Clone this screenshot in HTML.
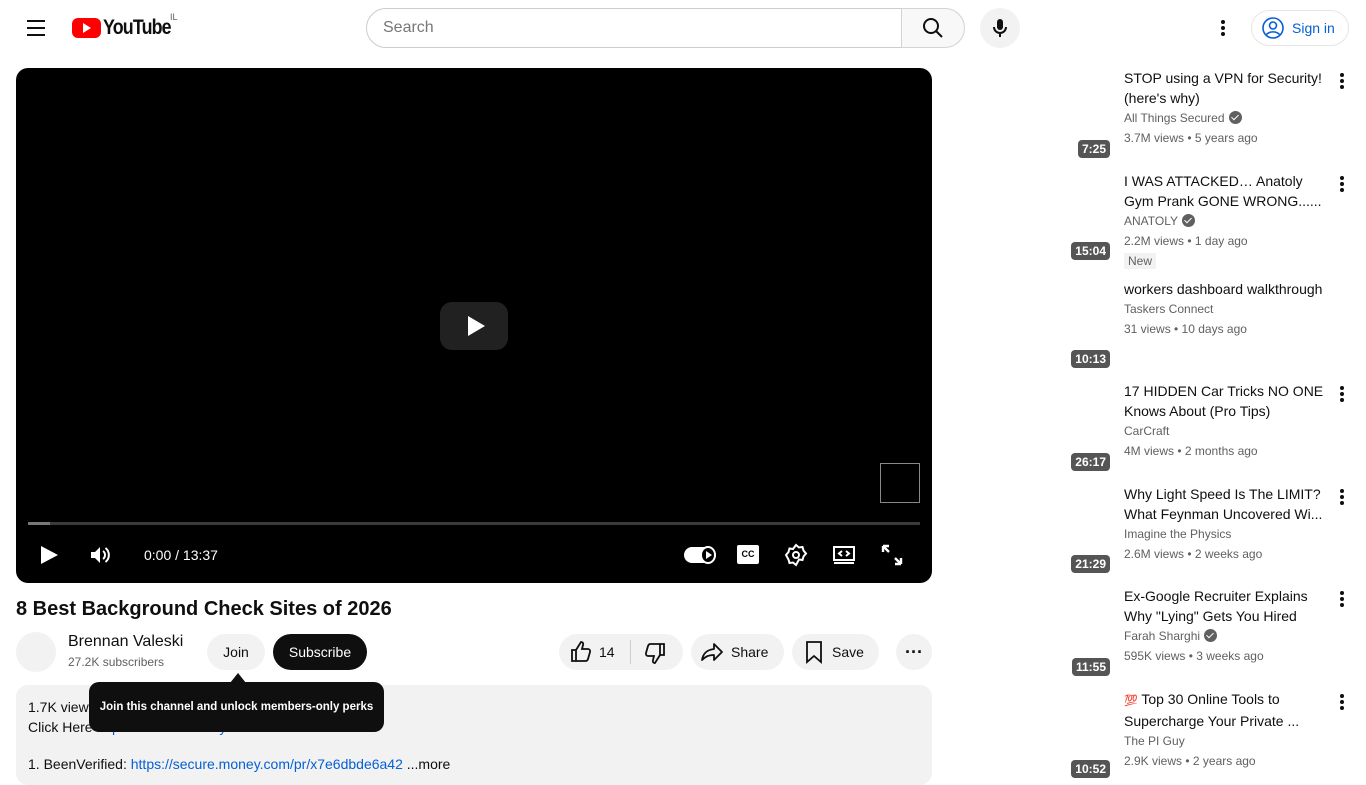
<!DOCTYPE html>
<html><head><meta charset="utf-8"><style>
*{box-sizing:border-box;margin:0;padding:0}
body{width:1366px;height:768px;overflow:hidden;background:#fff;font-family:"Liberation Sans",Arial,sans-serif;color:#0f0f0f;position:relative}
.abs{position:absolute}
.pill{position:absolute;background:#f2f2f2;border-radius:18px;height:36px;display:flex;align-items:center;font-size:14px}
.it{position:absolute;left:1124px;width:205px}
.it .t{font-size:14px;line-height:20px;color:#0f0f0f;white-space:nowrap;overflow:hidden;text-overflow:ellipsis}
.it .m{font-size:12px;line-height:20px;color:#606060}
.badge{position:absolute;right:256px;background:#555;color:#fff;font-size:12px;font-weight:bold;padding:1px 4px;border-radius:4px;line-height:16px}
.dots{position:absolute;left:1340px;width:4px}
.dots i{display:block;width:4px;height:4px;border-radius:2px;background:#0f0f0f;margin-bottom:2px}
.chk{display:inline-block;width:13px;height:13px;border-radius:50%;background:#606060;vertical-align:-2px;margin-left:4px;position:relative}
.chk:after{content:"";position:absolute;left:4px;top:2px;width:3px;height:6px;border:solid #fff;border-width:0 1.5px 1.5px 0;transform:rotate(45deg)}
</style></head><body>
<div class="abs" style="left:27px;top:20px;width:18px;height:2px;background:#0f0f0f;box-shadow:0 7px 0 #0f0f0f,0 14px 0 #0f0f0f"></div>
<div class="abs" style="left:72px;top:18px;width:29px;height:20px;background:#f00;border-radius:6px"></div>
<div class="abs" style="left:83px;top:23px;width:0;height:0;border-left:8px solid #fff;border-top:5px solid transparent;border-bottom:5px solid transparent"></div>
<div class="abs" style="left:103px;top:16px;font-size:21px;font-weight:bold;letter-spacing:-1px;transform:scaleX(.85);transform-origin:left">YouTube</div>
<div class="abs" style="left:170px;top:12px;font-size:9px;color:#606060">IL</div>
<div class="abs" style="left:366px;top:8px;width:536px;height:40px;border:1px solid #ccc;border-radius:20px 0 0 20px;padding-left:16px;line-height:38px;font-size:16px;color:#777">Search</div>
<div class="abs" style="left:901px;top:8px;width:64px;height:40px;border:1px solid #d3d3d3;border-radius:0 20px 20px 0;background:#f8f8f8"></div>
<svg class="abs" style="left:921px;top:16px" width="24" height="24" viewBox="0 0 24 24"><circle cx="10" cy="10" r="7" fill="none" stroke="#0f0f0f" stroke-width="2"/><path d="M15 15l6 6" stroke="#0f0f0f" stroke-width="2"/></svg>
<div class="abs" style="left:980px;top:8px;width:40px;height:40px;border-radius:50%;background:#f2f2f2"></div>
<svg class="abs" style="left:988px;top:16px" width="24" height="24" viewBox="0 0 24 24"><rect x="9" y="3" width="6" height="11" rx="3" fill="#0f0f0f"/><path d="M6 11a6 6 0 0012 0M12 17v4" fill="none" stroke="#0f0f0f" stroke-width="2"/></svg>
<div class="dots" style="left:1221px;top:20px"><i></i><i></i><i></i></div>
<div class="abs" style="left:1251px;top:10px;width:98px;height:36px;border:1px solid #e5e5e5;border-radius:18px;color:#065fd4;font-size:14px;line-height:34px;padding-left:40px">Sign in</div>
<svg class="abs" style="left:1261px;top:16px" width="24" height="24" viewBox="0 0 24 24"><circle cx="12" cy="12" r="10" fill="none" stroke="#065fd4" stroke-width="1.6"/><circle cx="12" cy="9.5" r="3.5" fill="none" stroke="#065fd4" stroke-width="1.6"/><path d="M5.5 18.5c3-3.5 10-3.5 13 0" fill="none" stroke="#065fd4" stroke-width="1.6"/></svg>
<div class="abs" style="left:16px;top:68px;width:916px;height:515px;background:#000;border-radius:12px"></div>
<div class="abs" style="left:440px;top:302px;width:68px;height:48px;background:#212121;border-radius:12px"></div>
<div class="abs" style="left:468px;top:316px;border-left:17px solid #fff;border-top:10px solid transparent;border-bottom:10px solid transparent"></div>
<div class="abs" style="left:880px;top:463px;width:40px;height:40px;border:1px solid #888"></div>
<div class="abs" style="left:28px;top:522px;width:892px;height:3px;background:#3a3a3a"></div>
<div class="abs" style="left:28px;top:522px;width:22px;height:3px;background:#777"></div>
<div class="abs" style="left:41px;top:546px;border-left:17px solid #fff;border-top:9px solid transparent;border-bottom:9px solid transparent"></div>
<svg class="abs" style="left:88px;top:543px" width="24" height="24" viewBox="0 0 24 24"><path d="M3 9h4l5-5v16l-5-5H3z" fill="#fff"/><path d="M15 8a5 5 0 010 8M17.5 5a9 9 0 010 14" fill="none" stroke="#fff" stroke-width="2"/></svg>
<div class="abs" style="left:144px;top:547px;color:#fff;font-size:14px">0:00 / 13:37</div>
<div class="abs" style="left:684px;top:547px;width:32px;height:16px;border-radius:8px;background:#fff"></div>
<div class="abs" style="left:700px;top:546px;width:16px;height:18px;border-radius:50%;background:#000;border:2px solid #fff"></div>
<div class="abs" style="left:706px;top:551px;border-left:6px solid #fff;border-top:4px solid transparent;border-bottom:4px solid transparent"></div>
<div class="abs" style="left:737px;top:545px;width:22px;height:19px;background:#fff;border-radius:2px;font-size:9px;font-weight:bold;color:#000;text-align:center;line-height:19px">CC</div>
<svg class="abs" style="left:784px;top:543px" width="24" height="24" viewBox="0 0 24 24"><path d="M12 2l3 2.5 3.5-.5 1 3.5 2.5 3-2.5 3-1 3.5-3.5-.5L12 22l-3-2.5-3.5.5-1-3.5L2 12l2.5-3 1-3.5 3.5.5z" fill="none" stroke="#fff" stroke-width="2"/><circle cx="12" cy="12" r="3" fill="none" stroke="#fff" stroke-width="2"/></svg>
<svg class="abs" style="left:832px;top:543px" width="24" height="24" viewBox="0 0 24 24"><rect x="2" y="4" width="20" height="13" fill="none" stroke="#fff" stroke-width="2"/><path d="M2 20h20M10 8l-3 2.5 3 2.5M14 8l3 2.5-3 2.5" fill="none" stroke="#fff" stroke-width="2"/></svg>
<svg class="abs" style="left:880px;top:543px" width="24" height="24" viewBox="0 0 24 24"><path d="M3 3h6M3 3v6M3 3l6 6M21 21h-6M21 21v-6M21 21l-6-6" fill="none" stroke="#fff" stroke-width="2.4"/></svg>
<div class="abs" style="left:16px;top:598px;font-size:20px;font-weight:bold">8 Best Background Check Sites of 2026</div>
<div class="abs" style="left:16px;top:632px;width:40px;height:40px;border-radius:50%;background:#f2f2f2"></div>
<div class="abs" style="left:68px;top:633px;font-size:16px">Brennan Valeski</div>
<div class="abs" style="left:68px;top:655px;font-size:12px;color:#606060">27.2K subscribers</div>
<div class="pill" style="left:207px;top:634px;width:58px;justify-content:center">Join</div>
<div class="pill" style="left:273px;top:634px;width:94px;justify-content:center;background:#0f0f0f;color:#fff">Subscribe</div>
<div class="pill" style="left:559px;top:634px;width:124px"></div>
<div class="abs" style="left:630px;top:640px;width:1px;height:24px;background:#ccc"></div>
<svg class="abs" style="left:569px;top:640px" width="24" height="24" viewBox="0 0 24 24"><path d="M3 10h4v11H3zM7 10l5-8c2 0 2.5 1.5 2 3l-1 4h6c1.5 0 2.5 1.5 2 3l-2 7c-.4 1.3-1.3 2-2.5 2H7" fill="none" stroke="#0f0f0f" stroke-width="1.8"/></svg>
<div class="abs" style="left:599px;top:644px;font-size:14px">14</div>
<svg class="abs" style="left:643px;top:641px;transform:rotate(180deg)" width="24" height="24" viewBox="0 0 24 24"><path d="M3 10h4v11H3zM7 10l5-8c2 0 2.5 1.5 2 3l-1 4h6c1.5 0 2.5 1.5 2 3l-2 7c-.4 1.3-1.3 2-2.5 2H7" fill="none" stroke="#0f0f0f" stroke-width="1.8"/></svg>
<div class="pill" style="left:691px;top:634px;width:93px;padding-left:40px">Share</div>
<svg class="abs" style="left:700px;top:640px" width="24" height="24" viewBox="0 0 24 24"><path d="M14 4l8 8-8 8v-5c-6 0-9 2-12 5 1-6 4-10 12-11z" fill="none" stroke="#0f0f0f" stroke-width="1.8" stroke-linejoin="round"/></svg>
<div class="pill" style="left:792px;top:634px;width:87px;padding-left:40px">Save</div>
<svg class="abs" style="left:802px;top:640px" width="24" height="24" viewBox="0 0 24 24"><path d="M5 2h14v20l-7-6-7 6z" fill="none" stroke="#0f0f0f" stroke-width="1.8"/></svg>
<div class="pill" style="left:896px;top:634px;width:36px;justify-content:center;font-weight:bold;font-size:18px;line-height:10px">&middot;&middot;&middot;</div>
<div class="abs" style="left:16px;top:685px;width:916px;height:100px;background:#f2f2f2;border-radius:12px"></div>
<div class="abs" style="left:28px;top:697px;font-size:14px;line-height:20px">1.7K views<br>Click Here <span style="color:#065fd4">https://secure.money.com/best-b...</span><br><br><span style="position:relative;top:-3px">1. BeenVerified: <span style="color:#065fd4">https://secure.money.com/pr/x7e6dbde6a42</span> ...more</span></div>
<div class="abs" style="left:230px;top:673px;border-bottom:10px solid #0f0f0f;border-left:8px solid transparent;border-right:8px solid transparent"></div>
<div class="abs" style="left:89px;top:682px;width:295px;height:50px;background:#0f0f0f;border-radius:10px;color:#fff;font-size:11.5px;font-weight:bold;line-height:50px;text-align:center">Join this channel and unlock members-only perks</div>
<div class="it" style="top:68px"><div class="t">STOP using a VPN for Security!</div><div class="t">(here's why)</div><div class="m">All Things Secured<span class="chk"></span></div><div class="m">3.7M views • 5 years ago</div></div>
<div class="badge" style="top:140px">7:25</div><div class="dots" style="top:73px"><i></i><i></i><i></i></div>
<div class="it" style="top:171px"><div class="t">I WAS ATTACKED… Anatoly</div><div class="t">Gym Prank GONE WRONG......</div><div class="m">ANATOLY<span class="chk"></span></div><div class="m">2.2M views • 1 day ago</div><div class="m"><span style="background:#f2f2f2;padding:1px 4px;font-size:12px">New</span></div></div>
<div class="badge" style="top:242px">15:04</div><div class="dots" style="top:176px"><i></i><i></i><i></i></div>
<div class="it" style="top:279px"><div class="t">workers dashboard walkthrough</div><div class="m">Taskers Connect</div><div class="m">31 views • 10 days ago</div></div>
<div class="badge" style="top:350px">10:13</div>
<div class="it" style="top:381px"><div class="t">17 HIDDEN Car Tricks NO ONE</div><div class="t">Knows About (Pro Tips)</div><div class="m">CarCraft</div><div class="m">4M views • 2 months ago</div></div>
<div class="badge" style="top:453px">26:17</div><div class="dots" style="top:386px"><i></i><i></i><i></i></div>
<div class="it" style="top:484px"><div class="t">Why Light Speed Is The LIMIT?</div><div class="t">What Feynman Uncovered Wi...</div><div class="m">Imagine the Physics</div><div class="m">2.6M views • 2 weeks ago</div></div>
<div class="badge" style="top:555px">21:29</div><div class="dots" style="top:489px"><i></i><i></i><i></i></div>
<div class="it" style="top:586px"><div class="t">Ex-Google Recruiter Explains</div><div class="t">Why "Lying" Gets You Hired</div><div class="m">Farah Sharghi<span class="chk"></span></div><div class="m">595K views • 3 weeks ago</div></div>
<div class="badge" style="top:658px">11:55</div><div class="dots" style="top:591px"><i></i><i></i><i></i></div>
<div class="it" style="top:689px"><div class="t"><span style="color:#e0245e;font-size:11px;font-weight:bold">💯</span> Top 30 Online Tools to</div><div class="t">Supercharge Your Private ...</div><div class="m">The PI Guy</div><div class="m">2.9K views • 2 years ago</div></div>
<div class="badge" style="top:760px">10:52</div><div class="dots" style="top:694px"><i></i><i></i><i></i></div>
</body></html>
